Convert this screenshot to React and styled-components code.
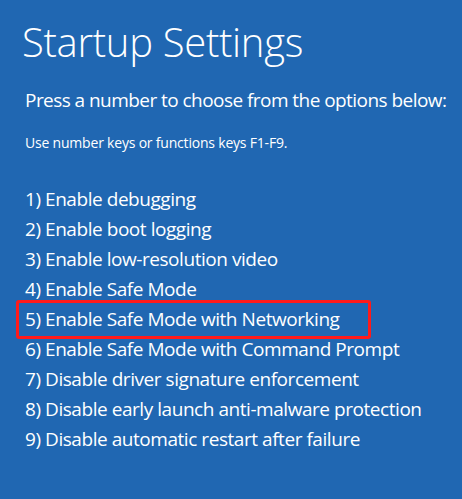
import React from "react";
import styled, { createGlobalStyle } from "styled-components";

const GlobalStyle = createGlobalStyle`
    html, body {
        margin: 0;
        padding: 0;
        background: #2067b2;
    }
    body {
        font-family: "Open Sans", "Noto Sans", sans-serif;
        color: #ffffff;
    }
`;

const Screen = styled.div`
    width: 462px;
    height: 499px;
    background: #2067b2;
    padding: 14px 0 0 22px;
    box-sizing: border-box;
    overflow: hidden;
`;

const Title = styled.h1`
    margin: 0;
    font-size: 40px;
    font-weight: 300;
    line-height: 56px;
    letter-spacing: -0.3px;
`;

const Prompt = styled.p`
    margin: 17px 0 0 3px;
    font-size: 19px;
    font-weight: 400;
    line-height: 26px;
    letter-spacing: -0.55px;
`;

const Hint = styled.p`
    margin: 21px 0 0 3px;
    font-size: 14px;
    line-height: 18px;
    letter-spacing: -0.2px;
`;

const OptionList = styled.ol`
    list-style: none;
    margin: 32px 0 0 0;
    padding: 0;
    display: flex;
    flex-direction: column;
`;

const Option = styled.li`
    position: relative;
    height: 30px;
    line-height: 30px;
    padding-left: 3px;
    font-size: 19px;
    letter-spacing: -0.45px;
    white-space: nowrap;
`;

/* red annotation frame drawn over the highlighted option */
const Highlight = styled.span`
    position: absolute;
    left: -6px;
    top: -4px;
    width: 355px;
    height: 39px;
    box-sizing: border-box;
    border: 3px solid #ff1a1a;
    border-radius: 3px;
    pointer-events: none;
`;

const options = [
    "Enable debugging",
    "Enable boot logging",
    "Enable low-resolution video",
    "Enable Safe Mode",
    "Enable Safe Mode with Networking",
    "Enable Safe Mode with Command Prompt",
    "Disable driver signature enforcement",
    "Disable early launch anti-malware protection",
    "Disable automatic restart after failure",
];

const App = () => {
    return (
        <>
            <GlobalStyle />
            <Screen>
                <Title>Startup Settings</Title>
                <Prompt>Press a number to choose from the options below:</Prompt>
                <Hint>Use number keys or functions keys F1-F9.</Hint>
                <OptionList>
                    {options.map((text, i) => (
                        <Option key={text}>
                            {i + 1}) {text}
                            {i === 4 && <Highlight />}
                        </Option>
                    ))}
                </OptionList>
            </Screen>
        </>
    );
};

export default App;
